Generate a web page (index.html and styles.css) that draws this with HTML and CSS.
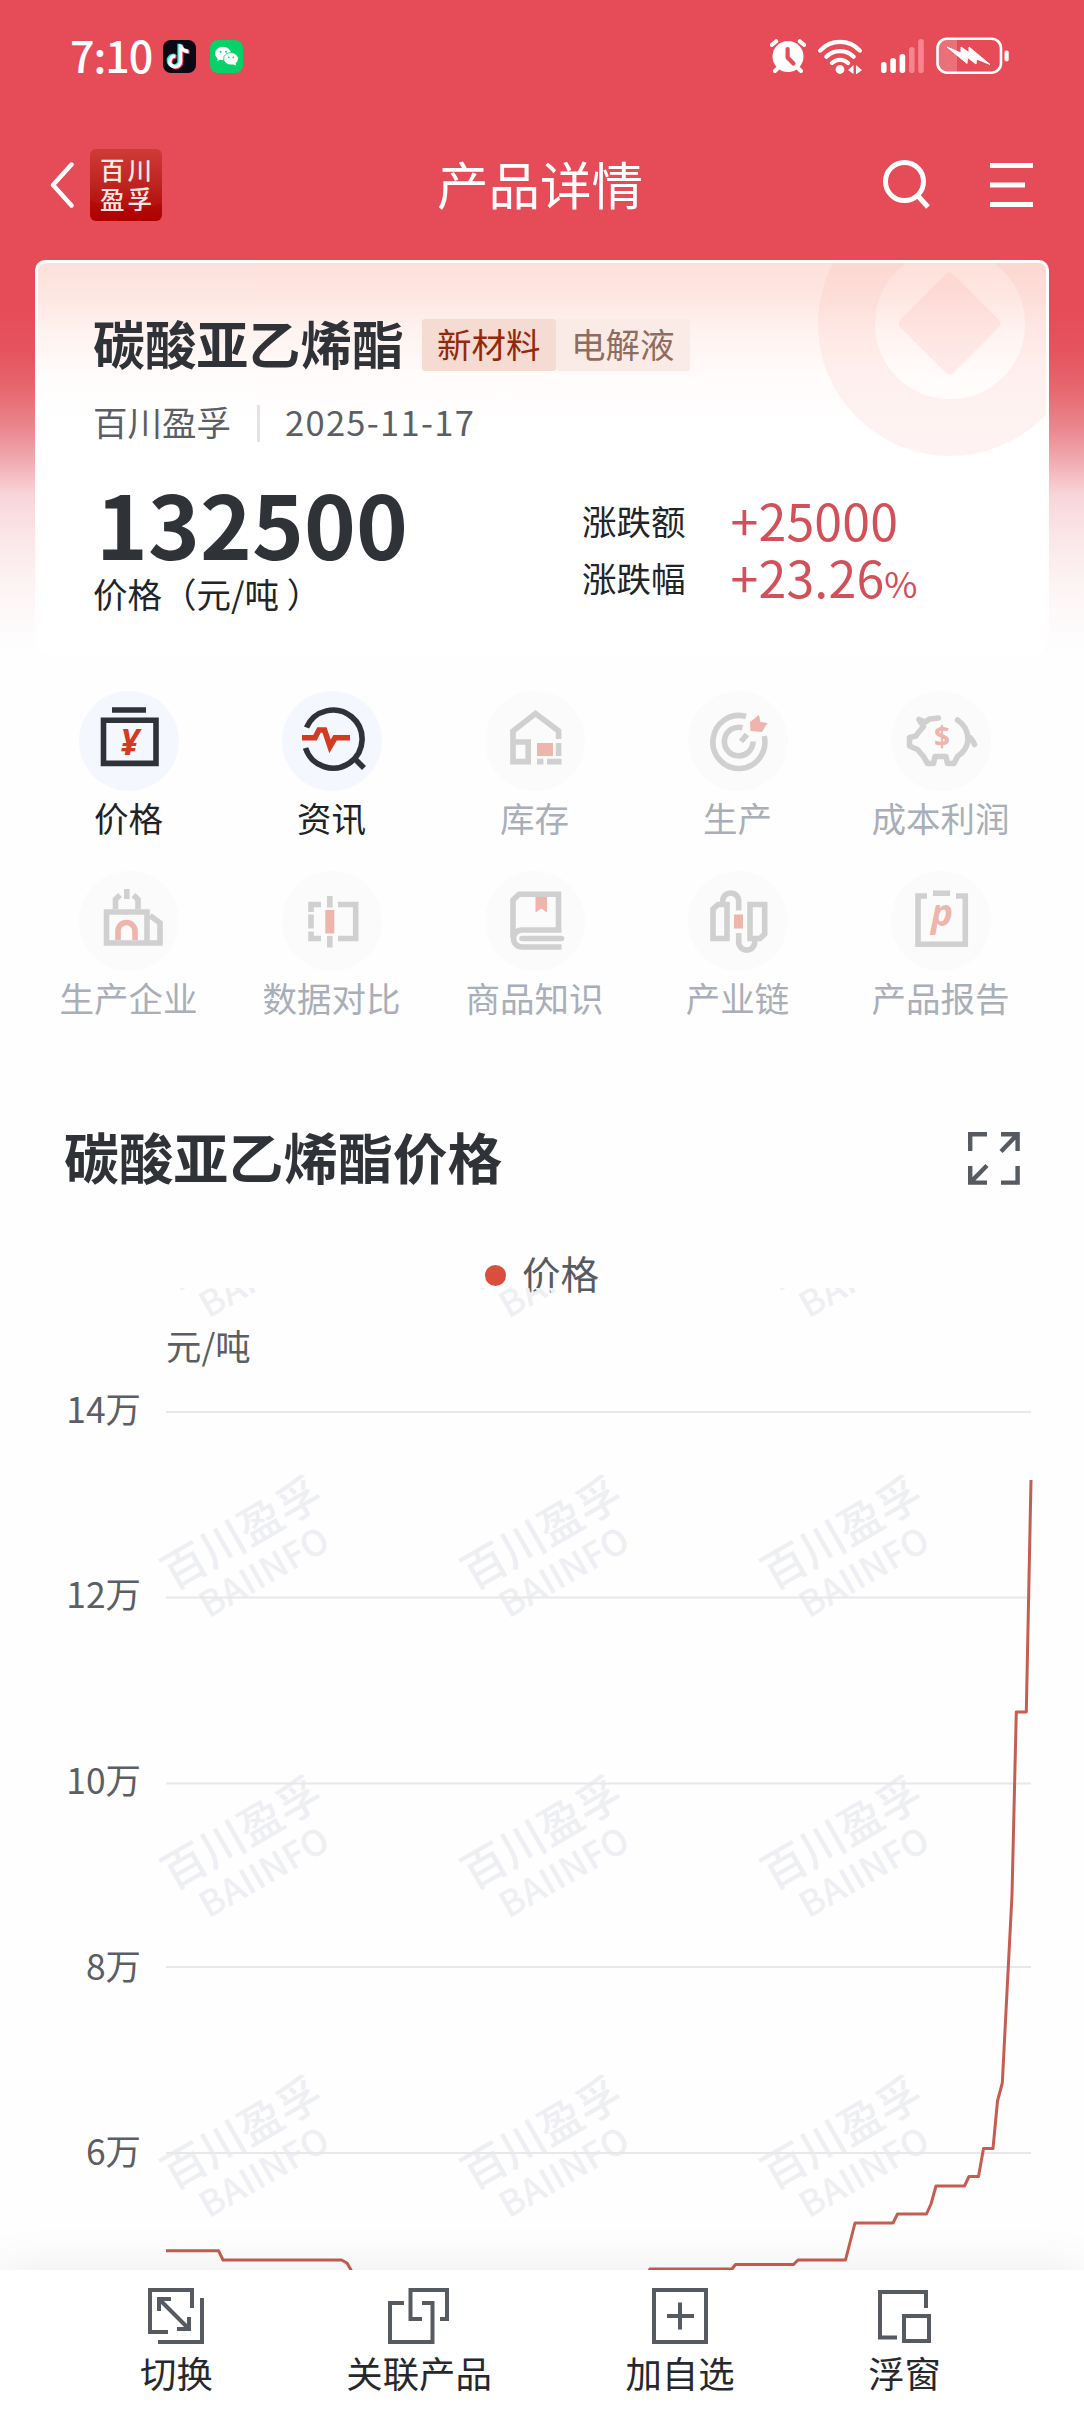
FILE: index.html
```html
<!DOCTYPE html>
<html lang="zh-CN">
<head>
    <meta charset="UTF-8" />
    <meta name="viewport" content="width=device-width, initial-scale=1.0" />
    <title>产品详情</title>
    <link rel="stylesheet" href="styles.css">
</head>
<body>

<div class="page">
    <header class="header">
        <div class="status-bar">
            <span class="time">7:10</span>
            <svg class="app-icon" width="33" height="33" viewBox="0 0 33 33">
                <rect width="33" height="33" rx="8" fill="#0b0a14"/>
                <g fill="none" stroke-width="3.6">
                    <path d="M17 4V21a5.4 5.4 0 1 1-5-5.4M17 5c1 4 4 6 8 6" stroke="#25e8e2" transform="translate(-.8 -.3)"/>
                    <path d="M17 4V21a5.4 5.4 0 1 1-5-5.4M17 5c1 4 4 6 8 6" stroke="#f5325c" transform="translate(1.6 1.2)"/>
                    <path d="M17 4V21a5.4 5.4 0 1 1-5-5.4M17 5c1 4 4 6 8 6" stroke="#fff" transform="translate(.5 .4)"/>
                </g>
            </svg>
            <svg class="app-icon" width="33" height="33" viewBox="0 0 33 33">
                <rect width="33" height="33" rx="8" fill="#07d168"/>
                <path d="M8 17l-.6 4 4-2z" fill="#fff"/>
                <ellipse cx="13" cy="13.5" rx="8" ry="6.8" fill="#fff"/>
                <ellipse cx="21" cy="18.8" rx="7.4" ry="6.2" fill="#fff" stroke="#07d168" stroke-width=".8"/>
                <path d="M22 24l4 1.6-.6-3.2z" fill="#fff"/>
                <g fill="#07d168"><circle cx="10.5" cy="11.7" r="1"/><circle cx="16" cy="11.7" r="1"/><circle cx="18.8" cy="17.3" r=".9"/><circle cx="23.3" cy="17.3" r=".9"/></g>
            </svg>
            <div class="status-icons">
                <svg width="36" height="34" viewBox="0 0 36 34">
                    <circle cx="18" cy="17.5" r="15.5" fill="#fff"/>
                    <path d="M1.8 6l4.5-3.8M34.2 6l-4.5-3.8M5 32l4-4M31 32l-4-4" stroke="#fff" stroke-width="4" stroke-linecap="round"/>
                    <path d="M17.6 10v8.5l5.8 6" fill="none" stroke="#e64b58" stroke-width="4.2" stroke-linecap="round" stroke-linejoin="round"/>
                </svg>
                <svg class="wifi" width="44" height="36" viewBox="0 0 44 36">
                    <g fill="none" stroke="#fff" stroke-width="4.2" stroke-linecap="round">
                        <path d="M2.2 12.6a27 27 0 0 1 39.6 0M8.4 18.8a19 19 0 0 1 27.2 0M14 25a11.5 11.5 0 0 1 16 0"/>
                    </g>
                    <circle cx="22" cy="31.5" r="4.4" fill="#fff"/>
                    <path d="M30 32l5.5-5v9zM44 32l-6 4.500V27z" fill="#fff"/>
                </svg>
                <svg class="signal" width="43" height="34" viewBox="0 0 43 34">
                    <g fill="#fff"><rect y="23" width="5.6" height="11" rx="2.8"/><rect x="9.3" y="19" width="5.6" height="15" rx="2.8"/><rect x="18.6" y="15" width="5.6" height="19" rx="2.8"/></g>
                    <g fill="#f88490"><rect x="28" y="8" width="5.6" height="26" rx="2.8"/><rect x="37.2" y="0" width="5.6" height="34" rx="2.8"/></g>
                </svg>
                <svg class="battery" width="74" height="38" viewBox="0 0 74 38">
                    <path d="M10 2h11v33H10a8 8 0 0 1-8-8V10a8 8 0 0 1 8-8z" fill="#ea7079"/>
                    <rect x="1.5" y="1.7" width="63.5" height="34" rx="9.5" fill="none" stroke="#fff" stroke-width="2.6"/>
                    <rect x="68.5" y="13.5" width="4.2" height="11" rx="2" fill="#fff"/>
                    <path d="M11 10l14 6v-6l8 5.5V10l21 17.5-13.5-5.5-.5 5-8.5-6.5-.5 6z" fill="#fff" stroke="#fff" stroke-linejoin="round"/>
                </svg>
            </div>
        </div>
        <nav class="nav">
            <svg class="back" width="24" height="46" viewBox="0 0 24 46"><path d="M21.5 2.5L3 23l18.5 20.5" fill="none" stroke="#fff" stroke-width="4.4" stroke-linecap="round" stroke-linejoin="round"/></svg>
            <div class="logo"><span>百川</span><span>盈孚</span></div>
            <h1>产品详情</h1>
            <svg class="search" width="48" height="50" viewBox="0 0 48 50"><g fill="none" stroke="#fff" stroke-width="5"><circle cx="21.5" cy="21.5" r="19"/><path d="M35 36l10 11"/></g></svg>
            <svg class="menu" width="43" height="44" viewBox="0 0 43 44"><path d="M0 2.5h43M0 22h35M0 41.5h43" stroke="#fff" stroke-width="4.8"/></svg>
        </nav>
    </header>

    <section class="card">
        <svg class="coin" width="264" height="264" viewBox="0 0 264 264">
            <circle cx="132" cy="132" r="103.5" fill="none" stroke="#f9a09c" stroke-opacity=".13" stroke-width="57"/>
            <rect x="94" y="94" width="75" height="75" rx="5" fill="#fba8a8" fill-opacity=".18" transform="rotate(45 131.5 131.5)"/>
        </svg>
        <div class="card-title">
            <h2>碳酸亚乙烯酯</h2>
            <span class="tag tag-main">新材料</span><span class="tag">电解液</span>
        </div>
        <div class="source">
            <span>百川盈孚</span>
            <i class="divider"></i>
            <span class="date">2025-11-17</span>
        </div>
        <div class="quote">
            <div class="price">
                <strong>132500</strong>
                <span>价格（元/吨 ）</span>
            </div>
            <div class="changes">
                <div class="change"><span>涨跌额</span><b>+25000</b></div>
                <div class="change"><span>涨跌幅</span><b>+23.26<small>%</small></b></div>
            </div>
        </div>
    </section>

    <section class="grid">
        <a class="item active">
            <svg class="icon" viewBox="0 0 100 100">
                <path class="line" d="M33 19h34M24.5 29.200h52.500v43.200h-52.500z"/>
                <text x="50.500" y="64" class="sign yen">¥</text>
            </svg>
            <span>价格</span>
        </a>
        <a class="item active">
            <svg class="icon" viewBox="0 0 100 100">
                <path class="line" d="M24.5 36.5a29 29 0 1 1-1 20.5M72 67l10 10"/>
                <path class="hot" d="M20 46.8h13l4-7.800h5.500l5.500 16.500 5-8.700h15"/>
            </svg>
            <span>资讯</span>
        </a>
        <a class="item">
            <svg class="icon" viewBox="0 0 100 100">
                <path class="line" d="M28 72V40L50.5 22.5 73.6 40v8M28 51h15.200v19.600H28zM73.600 52v13M52 70.600h6.500M62 70.600h14.500"/>
                <path class="fill" d="M52 52h16v13H52z"/>
            </svg>
            <span>库存</span>
        </a>
        <a class="item">
            <svg class="icon" viewBox="0 0 100 100">
                <path class="line" d="M58 25.5A26 26.500 0 1 0 76.200 45M54.500 36.800A14.300 14.300 0 1 0 65 50.500M53 50.500l6-7"/>
                <path class="fill" d="M62 31l9-7 1.500 7 7 1-5.500 9-11.500-1z"/>
            </svg>
            <span>生产</span>
        </a>
        <a class="item">
            <svg class="icon" viewBox="0 0 100 100">
                <path class="line round" d="M47.5 27l-9 1-4 3-6.500-2.500 4.500 7-5.500 6.500-2 3-6.500 1.500v8.500l8 3.500 6 7 4 7h6l1.500-7h11l1.500 7h6.500l3.500-7c6-4 10-10 10.500-17 0-9-4-15-10.500-19.500M78 46c2 1 4 4 5.500 7.500"/>
                <text x="51" y="56" class="sign dollar">$</text>
            </svg>
            <span>成本利润</span>
        </a>
        <a class="item">
            <svg class="icon" viewBox="0 0 100 100">
                <path class="line" d="M27.5 41h40.500v31h-40.500zM71 44.500l10 7.500v20H69M47.800 18v10M36.500 38v-9.500l4.500-4.500M59 38v-9.500l-4.500-4.500"/>
                <path class="hot" d="M39 69v-9a8.500 8.500 0 0 1 17 0v9"/>
            </svg>
            <span>生产企业</span>
        </a>
        <a class="item">
            <svg class="icon" viewBox="0 0 100 100">
                <path class="line" d="M39 33.5H29V41M29 43.500v14M29 60.500v7h10M47.800 25v11.500M47.800 65v11.500M56 33.500h17.700v34H56"/>
                <path class="fill" d="M43.3 39h9v23.500h-9z"/>
            </svg>
            <span>数据对比</span>
        </a>
        <a class="item">
            <svg class="icon" viewBox="0 0 100 100">
                <path class="line" d="M28 67V29l6-5.800h39.500V59M76.500 59H37a8.500 8.500 0 0 0 0 17h39.500"/>
                <path class="line" d="M76.5 67.500H37" stroke-linecap="round"/>
                <path class="fill" d="M50.5 26H62v15.500l-5.750-4-5.750 4z"/>
            </svg>
            <span>商品知识</span>
        </a>
        <a class="item">
            <svg class="icon" viewBox="0 0 100 100">
                <path class="line" d="M25 38l5-4.500h9v34H25zM34.700 32v-2a8 8 0 0 1 16 0v9.500M50.700 62v9a8 8 0 0 0 16 0v-3M62 33.500h14.700V63l-4.700 4.500H62z"/>
                <path class="fill" d="M46 43.5h9v14h-9z"/>
            </svg>
            <span>产业链</span>
        </a>
        <a class="item">
            <svg class="icon" viewBox="0 0 100 100">
                <path class="line" d="M36 25h-9v48.300h47.300V25H65M42 22.300h17"/>
                <text x="51" y="55" class="sign report">p</text>
            </svg>
            <span>产品报告</span>
        </a>
    </section>

    <section class="chart">
        <div class="chart-head">
            <h2>碳酸亚乙烯酯价格</h2>
            <svg width="52" height="53" viewBox="0 0 52 53"><path d="M19 2.2H2.2V19M33 2.2h16.600V19M49.600 2.200L33 19.500M2.200 34v16.600H19M2.200 50.600L19 33.500M49.600 34v16.600H33" fill="none" stroke="#565b62" stroke-width="4.4"/></svg>
        </div>
        <div class="legend"><i></i><span>价格</span></div>
        <svg class="plot" width="1084" height="1000" viewBox="0 1288 1084 1000">
            <defs>
                <g id="mark" class="mark">
                    <text y="17" class="mark-cn">百川盈孚</text>
                    <text x="0" y="59" class="mark-en">BAIINFO</text>
                </g>
            </defs>
            <g>
                <use href="#mark" transform="translate(241 1232) rotate(-30)"/>
                <use href="#mark" transform="translate(541 1232) rotate(-30)"/>
                <use href="#mark" transform="translate(841 1232) rotate(-30)"/>
                <use href="#mark" transform="translate(241 1532) rotate(-30)"/>
                <use href="#mark" transform="translate(541 1532) rotate(-30)"/>
                <use href="#mark" transform="translate(841 1532) rotate(-30)"/>
                <use href="#mark" transform="translate(241 1832) rotate(-30)"/>
                <use href="#mark" transform="translate(541 1832) rotate(-30)"/>
                <use href="#mark" transform="translate(841 1832) rotate(-30)"/>
                <use href="#mark" transform="translate(241 2132) rotate(-30)"/>
                <use href="#mark" transform="translate(541 2132) rotate(-30)"/>
                <use href="#mark" transform="translate(841 2132) rotate(-30)"/>
            </g>
            <path d="M166 1412h865M166 1597.5h865M166 1783.5h865M166 1967h865M166 2153h865" stroke="#e8e8e9" stroke-width="2"/>
            <g class="axis">
                <text x="166" y="1360">元/吨</text>
                <text x="141" y="1423">14万</text>
                <text x="141" y="1608">12万</text>
                <text x="141" y="1794">10万</text>
                <text x="141" y="1980">8万</text>
                <text x="141" y="2165">6万</text>
            </g>
            <polyline fill="none" stroke="#c55d50" stroke-width="3" stroke-linejoin="round" points="166,2250.7 218.5,2250.7 223,2260 341.5,2260 347,2263 351,2270 358,2286 640,2286 650,2269 732,2269 735.5,2264.5 793.5,2264.5 798,2260 845.5,2260 855,2223 893,2223 897.5,2214 926.5,2214 931,2204 936,2186 964.5,2186 969,2176.5 978.5,2176.5 983.5,2148.5 993,2148.5 997.5,2101 1002.3,2083 1012,1895 1016.3,1712 1026.3,1712 1031,1480"/>
        </svg>
    </section>

    <footer class="toolbar">
        <a>
            <svg width="56" height="56" viewBox="0 0 56 56"><path d="M20 44H2V2h42v18M10 54h44V10M11 11l30 30M23 11H11v12M29 41h12V29"/></svg>
            切换
        </a>
        <a>
            <svg width="62" height="56" viewBox="0 0 62 56"><path d="M34 31H22.5V2H59v29h-7M16 15H2v39h42.500V15H34"/></svg>
            关联产品
        </a>
        <a>
            <svg width="56" height="56" viewBox="0 0 56 56"><path d="M2 2h52v52H2zM15 28h27M28 14.5v27"/></svg>
            加自选
        </a>
        <a>
            <svg width="54" height="56" viewBox="0 0 54 56"><path d="M19 49.5H2V4h46v16M26 28h25v25H26z"/></svg>
            浮窗
        </a>
    </footer>
</div>

</body>
</html>
```

FILE: styles.css
```css
* {
    box-sizing: border-box;
    margin: 0;
    padding: 0;
}

body {
    font-family: 'Noto Sans CJK SC', 'Noto Sans', sans-serif;
    background: #fefefe;
    color: #212429;
}

svg {
    display: block;
    flex-shrink: 0;
}

.page {
    width: 1084px;
    height: 2412px;
    display: flex;
    flex-direction: column;
    overflow: hidden;
    background: linear-gradient(#e64b58 0, #e64b58 310px, #e5555f 355px, #e7686f 390px, #eb8890 430px, #f2b0b6 465px, #f8d5d9 495px, #fbe7e9 540px, #fdf5f5 590px, #fefefe 650px);
}

/* status bar + nav */
.header {
    height: 260px;
    flex-shrink: 0;
}

.status-bar {
    height: 112px;
    display: flex;
    align-items: center;
    padding: 0 74px 0 70px;
    color: #fff;
}

.time {
    width: 93px;
    padding-bottom: 4px;
    font-size: 43px;
    font-weight: 500;
    letter-spacing: -1px;
    line-height: 108px;
}

.app-icon {
    margin-right: 14px;
}

.status-icons {
    margin-left: auto;
    display: flex;
    align-items: center;
}

.wifi {
    margin-left: 12px;
}

.signal {
    margin: 0 12px 0 19px;
}

.nav {
    height: 146px;
    display: flex;
    align-items: center;
    padding: 0 51px 0 50px;
}

.logo {
    width: 72px;
    height: 72px;
    margin-left: 16px;
    padding-top: 6px;
    border-radius: 6px;
    background: radial-gradient(ellipse 60px 34px at 40px 26px, transparent 98%, rgba(170, 0, 0, 0.35)), linear-gradient(#d03a38, #bd241f 50%, #b10000);
    color: #ffe9e4;
    font-size: 24.5px;
    font-weight: 500;
    line-height: 29px;
    letter-spacing: 3px;
    text-align: center;
    text-indent: 3px;
}

.logo span {
    display: block;
}

h1 {
    flex: 1;
    padding: 0 0 6px 35px;
    color: #fff;
    font-size: 51.5px;
    font-weight: 400;
    text-align: center;
}

.search {
    margin-right: 59px;
}

/* price card */
.card {
    position: relative;
    height: 395px;
    margin: 0 35px;
    padding: 53px 55px 0;
    flex-shrink: 0;
    border: 3px solid rgba(255, 255, 255, 0.8);
    border-bottom: 0;
    border-radius: 10px;
    background: linear-gradient(#fee0da, #fee7e2 35px, #fff3f0 70px, #fffcfb 115px, #fff 160px) padding-box, #fff4f2;
    background-clip: padding-box, border-box;
    overflow: hidden;
}

.coin {
    position: absolute;
    top: -71px;
    right: -36px;
}

.card-title {
    position: relative;
    display: flex;
    align-items: center;
    height: 58px;
}

.card-title h2 {
    padding-bottom: 5px;
    color: #2f3338;
    font-size: 51.8px;
    line-height: 58px;
    margin-right: 18px;
}

.tag {
    width: 134px;
    height: 52px;
    border-radius: 3px;
    background: #fbebe6;
    color: #8e6d60;
    font-size: 34.5px;
    line-height: 49px;
    text-align: center;
}

.tag-main {
    background: #f5dbd2;
    color: #94290a;
}

.source {
    display: flex;
    align-items: center;
    height: 50px;
    margin-top: 24px;
    color: #5b5e64;
    font-size: 34.5px;
}

.source span {
    padding-bottom: 5px;
}

.divider {
    width: 3px;
    height: 37px;
    margin: 0 25px 0 26px;
    background: #e3e3e4;
}

.source .date {
    letter-spacing: 1.3px;
}

.quote {
    display: flex;
    margin-top: 24px;
}

.price {
    width: 489px;
}

.price strong {
    display: block;
    padding-left: 3px;
    color: #2f3338;
    font-size: 88px;
    line-height: 100px;
    letter-spacing: 0.1px;
}

.price span {
    display: block;
    padding-top: 1px;
    font-size: 34.5px;
    line-height: 40px;
}

.changes {
    padding-top: 20px;
}

.change {
    display: flex;
    align-items: center;
    height: 57px;
    font-size: 34.5px;
    line-height: 57px;
}

.change b {
    margin-left: 45px;
    padding-bottom: 2px;
    color: #d2505a;
    font-size: 50px;
    font-weight: 400;
    line-height: 57px;
    letter-spacing: 0.2px;
}

.change small {
    font-size: 36px;
    line-height: 40px;
}

/* entry grid */
.grid {
    display: grid;
    grid-template-columns: repeat(5, 203px);
    grid-auto-rows: 179.5px;
    margin: 36px 0 0 27px;
}

.item {
    display: flex;
    flex-direction: column;
    align-items: center;
    color: #a9aeb9;
    font-size: 34.5px;
    line-height: 50px;
}

.item.active {
    color: #202226;
}

.icon {
    width: 100px;
    height: 100px;
    margin-bottom: 1px;
    border-radius: 50%;
    background: #fbfbfb;
}

.active .icon {
    background: #f4f7fd;
}

.line {
    fill: none;
    stroke: #d0d0d0;
    stroke-width: 5.6;
}

.round {
    stroke-linecap: round;
    stroke-linejoin: round;
}

.active .line {
    stroke: #2f3338;
}

.hot {
    fill: none;
    stroke: #edb5ac;
    stroke-width: 5.6;
}

.fill {
    fill: #edb5ac;
}

.active .hot {
    stroke: #d43a20;
}

.sign {
    fill: #edb5ac;
    font-family: 'Open Sans', 'Noto Sans', sans-serif;
    font-weight: 700;
    text-anchor: middle;
}

.active .yen {
    fill: #d43a20;
    font-size: 35px;
    font-style: italic;
}

.dollar {
    font-size: 28px;
}

.report {
    font-size: 37px;
    font-style: italic;
}

/* chart */
.chart {
    margin-top: 78px;
    flex-shrink: 0;
}

.chart-head {
    display: flex;
    justify-content: space-between;
    align-items: center;
    height: 60px;
    padding: 0 64px;
}

.chart-head h2 {
    padding-bottom: 6px;
    color: #2f3338;
    font-size: 54.8px;
    line-height: 60px;
}

.legend {
    display: flex;
    align-items: center;
    justify-content: center;
    height: 56px;
    margin-top: 58px;
    color: #565a61;
    font-size: 38.5px;
}

.legend i {
    width: 21px;
    height: 21px;
    margin: 2px 16px 0 0;
    border-radius: 50%;
    background: #d94f3e;
}

.legend span {
    padding-bottom: 4px;
}

.plot {
    margin-top: -14px;
}

.axis {
    fill: #5b5e64;
    font-size: 35.4px;
    text-anchor: end;
}

.axis text:first-child {
    text-anchor: start;
}

.mark {
    fill: #eeeff3;
    font-weight: 500;
    text-anchor: middle;
}

.mark-cn {
    font-size: 44px;
}

.mark-en {
    font-size: 35.5px;
    letter-spacing: 0.4px;
}

/* bottom toolbar */
.toolbar {
    position: absolute;
    top: 2270px;
    left: 0;
    width: 1084px;
    height: 142px;
    display: flex;
    justify-content: space-between;
    padding: 0 143px 0 140px;
    background: #fff;
    box-shadow: 0 0 50px rgba(0, 0, 0, 0.08);
}

.toolbar a {
    display: flex;
    flex-direction: column;
    align-items: center;
    padding-top: 18px;
    color: #26282d;
    font-size: 36.4px;
    line-height: 54px;
}

.toolbar svg {
    margin-bottom: 1px;
    fill: none;
    stroke: #565b62;
    stroke-width: 4;
}
```
